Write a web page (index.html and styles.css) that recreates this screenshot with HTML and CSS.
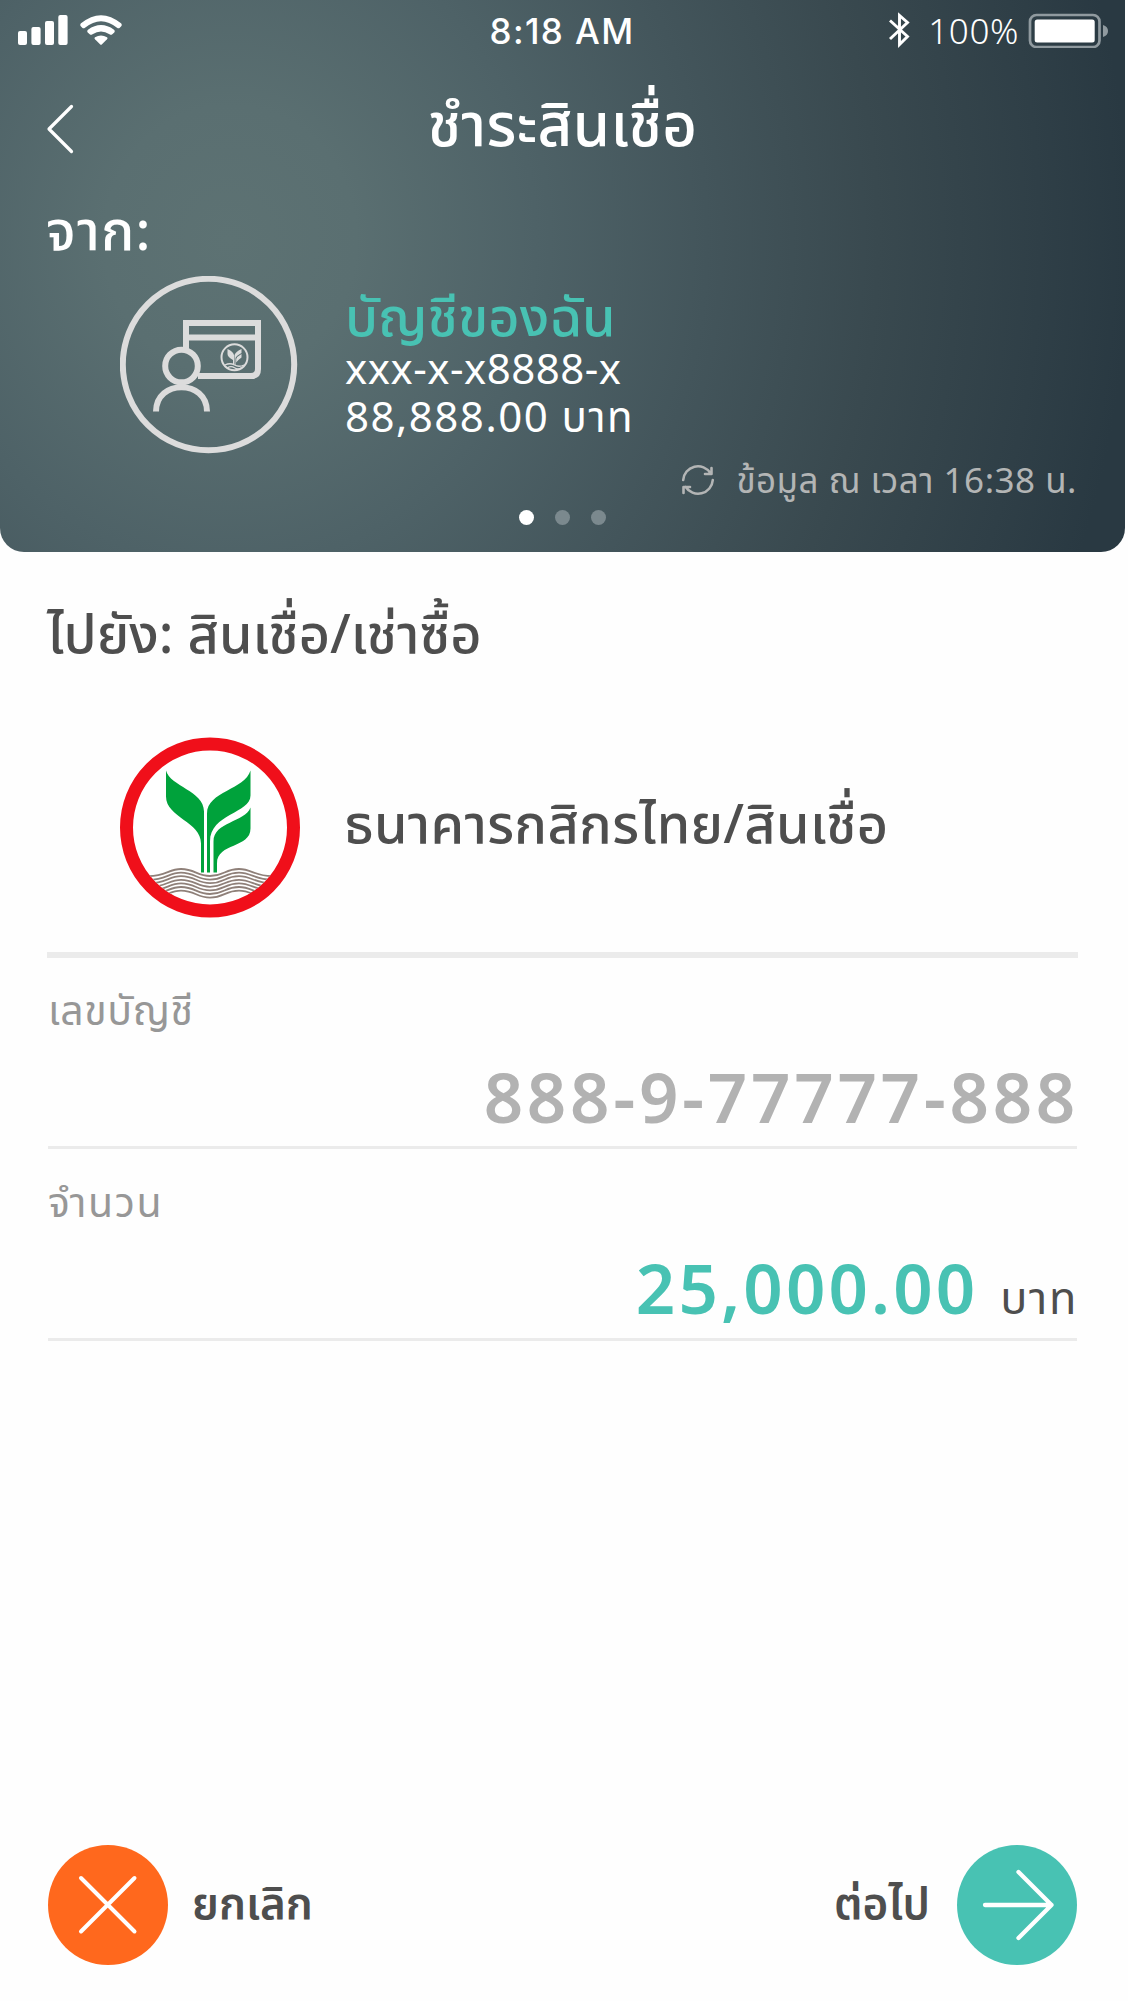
FILE: index.html
```html
<!DOCTYPE html>
<html lang="th">
<head>
<meta charset="utf-8">
<title>ชำระสินเชื่อ</title>
<link rel="stylesheet" href="styles.css">
</head>
<body>
<header class="hero">
  <div class="status">
    <div class="status-left">
      <svg width="50" height="30" viewBox="0 0 50 30" fill="#fff"><rect y="16" width="9" height="14" rx="2"/><rect x="13.4" y="12" width="9.2" height="18" rx="2"/><rect x="27" y="6" width="9" height="24" rx="2"/><rect x="40.3" y="0" width="9.3" height="30" rx="2"/></svg>
      <svg width="42" height="30" viewBox="0 0 42 30" fill="#fff"><path d="M1 8.300Q21-8 41 8.300Q42.500 10 41 11.500L39.500 13Q38.500 13.800 37 12.800Q21-.5 5 12.800Q3.500 13.800 2.500 13L1 11.500Q-.5 10 1 8.300Z"/><path d="M8 14.700Q21 5.500 34 14.700Q35.600 16 34.300 17.500L32 19.600Q31 20.300 29.500 19.200Q21 13.600 12.500 19.200Q11 20.300 10 19.600L7.700 17.500Q6.400 16 8 14.700Z"/><path d="M15 22.200Q21 19 27 22.200Q28 23.200 27 24.200L22 29.200Q21 30.200 20 29.200L15 24.200Q14 23.200 15 22.200Z"/></svg>
    </div>
    <div class="clock">8:18 AM</div>
    <div class="status-right">
      <svg width="22" height="36" viewBox="0 0 22 36" fill="none" stroke="#fff" stroke-width="2.900"><path d="M2 8.500L19.500 24.500L11.500 32.500V3.500L19.500 10.500L2 27"/></svg>
      <span class="percent">100%</span>
      <svg width="81" height="36" viewBox="0 0 81 36"><rect x="2" y="3" width="69.500" height="32" rx="6.500" fill="none" stroke="#909a9f" stroke-width="2.700"/><rect x="6.700" y="7.500" width="60" height="23" rx="2.500" fill="#fff"/><path d="M75 13Q80 14.500 80 19T75 25Z" fill="#909a9f"/></svg>
    </div>
  </div>
  <div class="titlebar">
    <svg class="back" width="28" height="50" viewBox="0 0 28 50" fill="none" stroke="#fff" stroke-width="3.200" stroke-linecap="round" stroke-linejoin="round"><path d="M25.500 2.500L3 25L25.500 47.500"/></svg>
    <h1 class="title">ชำระสินเชื่อ</h1>
  </div>
  <div class="from">จาก:</div>
  <div class="account">
    <svg width="178" height="178" viewBox="0 0 178 178" fill="none" stroke="#dcdcdc" stroke-width="6"><circle cx="88.500" cy="88.500" r="85.700"/><path d="M66 73V47H138V93Q138 100 131 100H78"/><path d="M66 61.500H138"/><circle cx="61.500" cy="90" r="16.300"/><path d="M36 135.500C36 103 87 103 87 135.500"/><g stroke="none" fill="#dcdcdc"><circle cx="114.500" cy="81.300" r="13" fill="none" stroke="#dcdcdc" stroke-width="2"/><path d="M107.500 73Q113 75.500 114 79V89H113V84Q107.500 81 107.500 78ZM121.500 73V77Q116 80 115.500 82V89H114.500V79Q116 75.500 121.500 73ZM121.500 78V81.500Q118 84 116.200 86.500V83Q117 80.500 121.500 78Z"/><path d="M105 89Q110 86.500 114.500 89T124 89M107.500 91.700Q111 89.500 114.500 91.700T121.500 91.700" fill="none" stroke="#dcdcdc" stroke-width="1.300"/></g></svg>
    <div class="account-info">
      <div class="account-name">บัญชีของฉัน</div>
      <div class="account-line number">xxx-x-x8888-x</div>
      <div class="account-line balance">88,888.00 บาท</div>
    </div>
  </div>
  <div class="updated">
    <svg width="34" height="34" viewBox="0 0 34 34" fill="none" stroke="#b3b5b5" stroke-width="2.600" stroke-linecap="round" stroke-linejoin="round"><path d="M2.200 17A14.800 14.800 0 0 1 29.500 10.200M30.500 5V11H24"/><path d="M31.800 17A14.800 14.800 0 0 1 4.500 23.800M2.500 30V24H9"/></svg>
    <span class="updated-text">ข้อมูล ณ เวลา 16:38 น.</span>
  </div>
  <div class="dots"><i class="dot on"></i><i class="dot"></i><i class="dot"></i></div>
</header>
<main class="content">
  <h2 class="to">ไปยัง: สินเชื่อ/เช่าซื้อ</h2>
  <div class="payee">
    <svg width="180" height="181" viewBox="0 -0.5 180 181"><defs><clipPath id="disc"><circle cx="90" cy="90" r="77"/></clipPath></defs><circle cx="90" cy="90" r="83.500" fill="#fff" stroke="#f00f1a" stroke-width="13"/><path fill="#00a23b" d="M46 33C50 49 84 53 84 74V135H81V106C81 84 46 80 46 59ZM130.500 33V58C130.500 76 90 76 90 104V135H87V76C87 54 125 52 130.500 33ZM130.500 70V91C130.500 111 97 105 97 126V135H93.500V104C93.500 84 125 85 130.500 70Z"/><g clip-path="url(#disc)" fill="none" stroke="#8f8079" stroke-width="1.800"><path id="wave" d="M25 138.500C45 140 48 131.500 61 131.500C75 131.500 77 138.500 90 138.500C104 138.500 105 131.500 119 131.500C132 131.500 137 140 155 138.500"/><use href="#wave" y="3.600"/><use href="#wave" y="7.200"/><use href="#wave" y="10.800"/><use href="#wave" y="14.400"/><use href="#wave" y="18"/><use href="#wave" y="21.600"/></g></svg>
    <div class="payee-name">ธนาคารกสิกรไทย/สินเชื่อ</div>
  </div>
  <section class="field field-account">
    <div class="label">เลขบัญชี</div>
    <div class="value"><span class="acct-value">888-9-77777-888</span></div>
  </section>
  <section class="field">
    <div class="label label-amount">จำนวน</div>
    <div class="value"><span class="amount">25,000.00</span><span class="unit">บาท</span></div>
  </section>
</main>
<footer class="actions">
  <div class="action">
    <svg width="120" height="120" viewBox="0 0 120 120" fill="none" stroke="#fff" stroke-width="4" stroke-linecap="round"><circle cx="60" cy="60" r="60" fill="#ff681d" stroke="none"/><path d="M33 33L86.500 86.500M86.500 33L33 86.500"/></svg>
    <span class="action-label">ยกเลิก</span>
  </div>
  <div class="action next">
    <span class="action-label">ต่อไป</span>
    <svg width="120" height="120" viewBox="0 0 120 120" fill="none" stroke="#fff" stroke-width="4.300" stroke-linecap="round" stroke-linejoin="round"><circle cx="60" cy="60" r="60" fill="#48c2b3" stroke="none"/><path d="M28 60H94.500M61.500 27L94.500 60L61.500 93"/></svg>
  </div>
</footer>
</body>
</html>
```
FILE: styles.css
```css
* { box-sizing: border-box; }
body {
  margin: 0;
  height: 2001px;
  display: flex;
  flex-direction: column;
  background: #fefefe;
  color: #4e4e4e;
  font-family: "Noto Sans", "Noto Sans Thai", sans-serif;
  white-space: nowrap;
}
svg { display: block; flex: none; }
h1, h2 { margin: 0; font-weight: 500; }

.hero {
  width: 1125px;
  height: 552px;
  flex: none;
  border-radius: 0 0 24px 24px;
  color: #fff;
  background: radial-gradient(ellipse 900px 960px at 230px 240px, #5d7273 0, #5a6f71 14%, #4e6267 34%, #43555b 53%, #39494f 72%, #2f3f47 90%, #293942 100%);
}
.status { height: 62px; display: grid; grid-template-columns: 1fr auto 1fr; padding: 0 16px 0 18px; }
.status-left { display: flex; gap: 12px; padding-top: 15px; }
.clock { font: 500 35px/62px Inter, sans-serif; letter-spacing: 1.4px; margin-right: 3px; }
.status-right { display: flex; justify-content: flex-end; padding-top: 12px; }
.percent { font: 350 35px/38px "Noto Sans", sans-serif; letter-spacing: .6px; margin: 0 9px 0 18px; }
.titlebar { height: 130px; display: grid; grid-template-columns: 28px 1fr 28px; padding: 0 46px; }
.back { margin-top: 42px; }
.title { font-size: 60px; line-height: 123px; letter-spacing: .3px; text-align: center; }
.from { height: 84px; padding-left: 46px; font-size: 55px; font-weight: 500; line-height: 73px; letter-spacing: 1.2px; }
.account { height: 178px; display: flex; gap: 47px; padding-left: 120px; }
.account-info { padding-top: 11px; }
.account-name { font-size: 54px; font-weight: 500; line-height: 56px; color: #48c2b3; }
.account-line { font-size: 42px; line-height: 48px; }
.number { padding-top: 1px; letter-spacing: .5px; }
.balance { letter-spacing: 1.5px; }
.updated { height: 50px; display: flex; gap: 21px; justify-content: flex-end; align-items: center; padding-right: 48px; color: #b3b5b5; font-size: 35px; }
.updated svg { margin-top: 2px; }
.updated-text { line-height: 50px; letter-spacing: .5px; padding-top: 1px; }
.dots { display: flex; justify-content: center; gap: 21px; padding-top: 6px; }
.dot { width: 15px; height: 15px; border-radius: 50%; background: #7b898e; }
.dot.on { background: #fff; }

.content { padding: 0 50px 0 47px; }
.to { height: 185px; font-size: 54px; line-height: 161px; }
.payee { height: 221px; display: flex; gap: 44px; padding-left: 73px; border-bottom: 6px solid #ebebeb; }
.payee-name { font-size: 54px; font-weight: 500; line-height: 170px; letter-spacing: .3px; }
.field { height: 192px; margin: 0 1px; border-bottom: 3px solid #ebebeb; }
.field-account { height: 191px; }
.label { height: 92px; font-size: 41px; line-height: 102px; letter-spacing: .6px; color: #979797; }
.label-amount { line-height: 104px; letter-spacing: 1.6px; }
.value { display: flex; justify-content: flex-end; align-items: baseline; gap: 22px; font-size: 69px; font-weight: 600; line-height: 93px; }
.acct-value { color: #b2b2b2; letter-spacing: 3.7px; margin-right: -2px; }
.amount { color: #48c2b3; letter-spacing: 3.1px; }
.unit { font-size: 45px; font-weight: 400; letter-spacing: 1.6px; margin-right: -1px; }

.actions { margin-top: auto; height: 156px; display: flex; justify-content: space-between; padding: 0 51px 0 48px; }
.action { display: flex; gap: 24px; font-size: 44px; font-weight: 600; line-height: 114px; }
.next { gap: 27px; }
```
